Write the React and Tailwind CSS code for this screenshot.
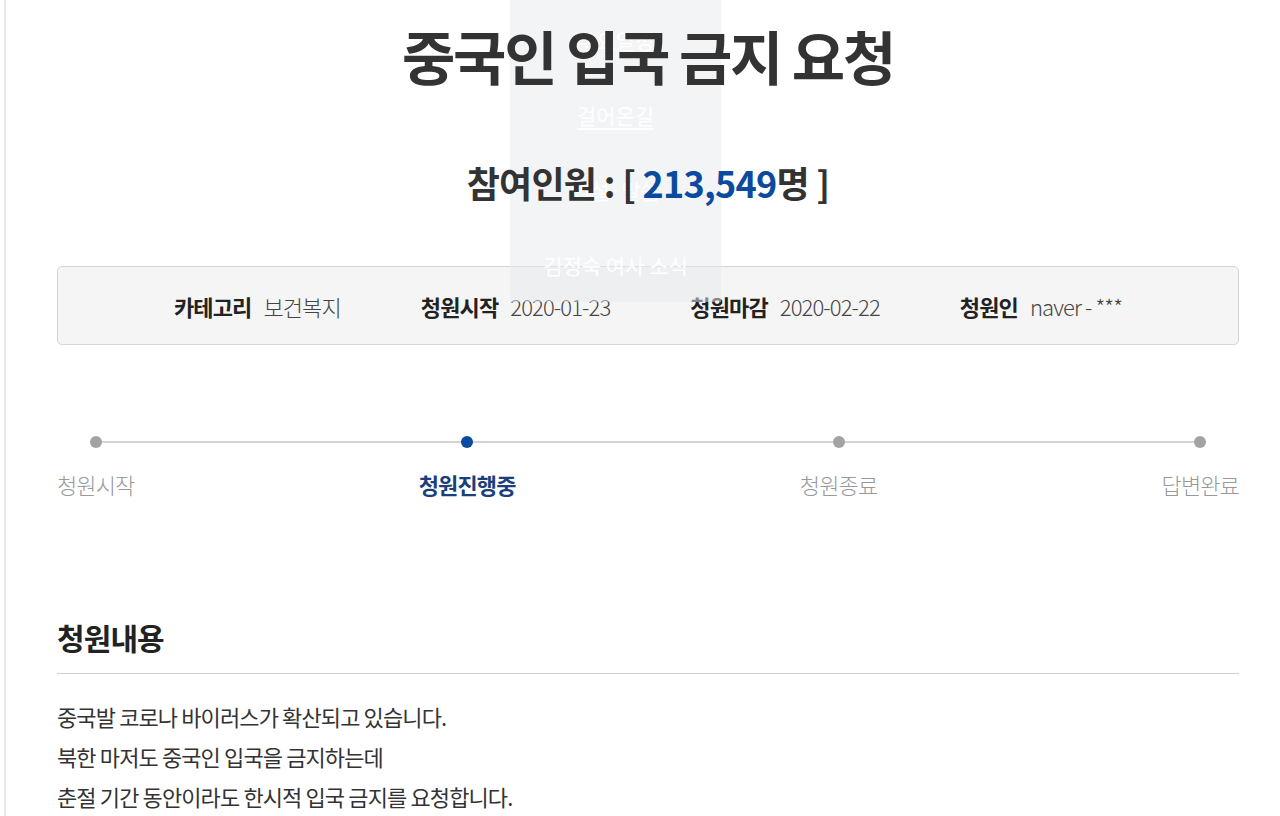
import React from "react"

const info = [
  { label: "카테고리", value: "보건복지" },
  { label: "청원시작", value: "2020-01-23" },
  { label: "청원마감", value: "2020-02-22" },
  { label: "청원인", value: "naver - ***" },
]

const steps = [
  { name: "청원시작", active: false },
  { name: "청원진행중", active: true },
  { name: "청원종료", active: false },
  { name: "답변완료", active: false },
]

const menu = ["주요일정", "걸어온길", "연설·말씀", "김정숙 여사 소식"]

function App() {
  return (
    <div
      className="relative min-h-[816px] bg-white overflow-hidden"
      style={{ fontFamily: '"Noto Sans CJK KR", "Noto Sans", sans-serif' }}
    >
      {/* dropdown menu of the site header, lying over the page */}
      <div className="absolute left-[510px] top-0 w-[211px] h-[302px] bg-[#e6e9ee]/50 flex flex-col items-center pt-[22px] gap-[39px]">
        {menu.map((m, i) => (
          <span
            key={m}
            className={
              "text-[21px] leading-[36px] text-white " + (i === 1 ? "underline underline-offset-4" : "")
            }
          >
            {m}
          </span>
        ))}
      </div>

      <div className="ml-[4px] border-l-2 border-[#e8e8e8] min-h-[816px]">
        <div className="pl-[51px] pr-[41px]">
          <h1 className="relative z-10 pt-[22px] text-center text-[58px] leading-[66px] font-bold tracking-[-0.04em] text-[#333]">
            중국인 입국 금지 요청
          </h1>

          <p className="relative z-10 mt-[73px] text-center text-[36px] leading-[42px] font-bold text-[#333] tracking-[-0.02em]">
            참여인원 : [ <span className="text-[#0b4a9e]">213,549</span>명 ]
          </p>

          <div className="mt-[63px] h-[79px] rounded-[5px] border border-[#d6d6d6] bg-[#f5f5f5] flex items-center justify-center gap-[80px]">
            {info.map(it => (
              <div key={it.label} className="flex items-center gap-[12px] text-[22px] leading-[30px] tracking-[-0.04em]">
                <span className="font-bold text-[#222]">{it.label}</span>
                <span className="font-light text-[#444]">{it.value}</span>
              </div>
            ))}
          </div>

          <div className="relative mt-[91px]">
            <div className="absolute top-[5px] left-[38px] right-[38px] h-[2px] bg-[#d4d4d4]"></div>
            <div className="relative flex justify-between">
              {steps.map(s => (
                <div key={s.name} className="flex flex-col items-center">
                  <span
                    className={
                      "w-[12px] h-[12px] rounded-full " + (s.active ? "bg-[#0b4a9e]" : "bg-[#a3a3a3]")
                    }
                  ></span>
                  <span
                    className={
                      "mt-[21px] text-[22px] leading-[30px] tracking-[-0.04em] " +
                      (s.active ? "font-bold text-[#1b3f7d]" : "font-light text-[#999]")
                    }
                  >
                    {s.name}
                  </span>
                </div>
              ))}
            </div>
          </div>

          <h2 className="mt-[118px] pb-[16px] border-b border-[#d0d0d0] text-[30px] leading-[40px] font-bold text-[#222] tracking-[-0.03em]">
            청원내용
          </h2>

          <div className="mt-[22px] text-[22px] leading-[40px] text-[#333] tracking-[-0.04em]">
            <p>중국발 코로나 바이러스가 확산되고 있습니다.</p>
            <p>북한 마저도 중국인 입국을 금지하는데</p>
            <p>춘절 기간 동안이라도 한시적 입국 금지를 요청합니다.</p>
          </div>
        </div>
      </div>
    </div>
  )
}

export default App
